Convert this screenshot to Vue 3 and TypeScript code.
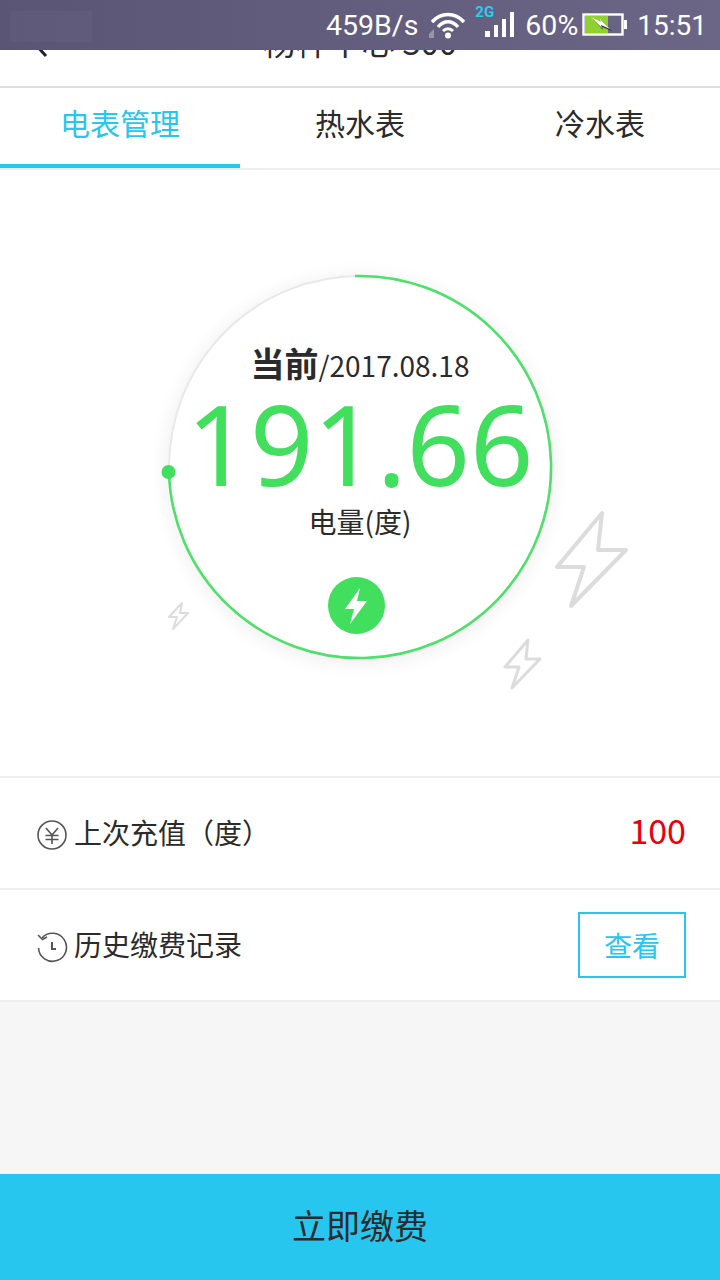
<script setup lang="ts">
import { ref } from 'vue'

const tabs = ['电表管理', '热水表', '冷水表']
const activeTab = ref(0)
</script>

<template>
  <div class="page">
    <div class="status-bar">
      <div class="status-blur"></div>
      <span class="speed">459B/s</span>
      <svg class="wifi" width="38" height="28" viewBox="0 0 38 28" fill="none">
        <path d="M3 11C12 1 26 1 35 11" stroke="#fff" stroke-width="3.4" />
        <path d="M9 16C15 9 23 9 29 16" stroke="#fff" stroke-width="3.4" />
        <path d="M14 20C17 17 21 17 24 20" stroke="#fff" stroke-width="3" />
        <circle cx="19" cy="24.5" r="3" fill="#fff" />
        <path d="M0 23L5 18V27H0Z" fill="#9a96aa" />
      </svg>
      <div class="signal">
        <span class="net">2G</span>
        <svg width="30" height="26" viewBox="0 0 30 26" fill="#fff">
          <rect x="1" y="19" width="5" height="6" />
          <rect x="10" y="13" width="4" height="12" />
          <rect x="18" y="7" width="4" height="18" />
          <rect x="26" y="0" width="4" height="25" />
        </svg>
      </div>
      <span class="percent">60%</span>
      <svg class="battery" width="46" height="24" viewBox="0 0 46 24">
        <rect x="1.5" y="1.5" width="39" height="20" fill="none" stroke="#fff" stroke-width="2.4" />
        <rect x="3" y="3" width="23" height="17" fill="#8fd22e" />
        <rect x="42" y="7" width="3" height="9" fill="#fff" />
        <path d="M10 5L20 10L19 7L30 18L20 14L21 17Z" fill="#333" />
        <path d="M9 4L19 9L18 6L28 16L19 12L20 15Z" fill="#fff" />
      </svg>
      <span class="clock">15:51</span>
    </div>

    <header class="top-bar">
      <svg class="back" width="20" height="30" viewBox="0 0 20 30" fill="none">
        <path d="M15 3L4 15L15 27" stroke="#222" stroke-width="3" />
      </svg>
      <span class="title">杨梓中心 300</span>
    </header>

    <nav class="tabs">
      <div
        v-for="(tab, i) in tabs"
        :key="tab"
        class="tab"
        :class="{ active: i === activeTab }"
        @click="activeTab = i"
      >
        {{ tab }}
      </div>
    </nav>

    <section class="meter">
      <div class="ring">
        <svg class="ring-arc" width="400" height="400" viewBox="-8 -8 400 400" fill="none">
          <circle cx="192" cy="192" r="191" stroke="#e8e8e8" stroke-width="2" />
          <path d="M187 1A191 191 0 1 1 1 197" stroke="#4ee06a" stroke-width="2.6" />
          <circle cx="0.5" cy="197" r="7" fill="#41df5d" />
        </svg>
        <div class="ring-date"><b>当前</b>/2017.08.18</div>
        <div class="ring-value">191.66</div>
        <div class="ring-unit">电量(度)</div>
        <div class="ring-badge">
          <svg width="26" height="38" viewBox="0 0 26 38" fill="#fff">
            <path d="M17 1L2 22H11L7 37L24 14H14Z" />
          </svg>
        </div>
      </div>
      <svg class="bolt bolt-lg" width="76" height="100" viewBox="0 0 76 100" fill="none">
        <path d="M48 3L3 57H30L17 96L72 40H44Z" />
      </svg>
      <svg class="bolt bolt-md" width="42" height="54" viewBox="0 0 42 54" fill="none">
        <path d="M26 2L3 29H17L10 50L38 21H24Z" />
      </svg>
      <svg class="bolt bolt-sm" width="24" height="30" viewBox="0 0 24 30" fill="none">
        <path d="M15 2L2 16H10L6 28L21 12H13Z" />
      </svg>
    </section>

    <div class="row">
      <div class="row-label">
        <svg width="32" height="32" viewBox="0 0 32 32" fill="none" stroke="#555" stroke-width="1.6">
          <circle cx="16" cy="16" r="14" />
          <path d="M10 9L16 16L22 9M16 16V25M9.500 16.500H22.500M9.500 20.500H22.500" />
        </svg>
        <span>上次充值（度）</span>
      </div>
      <span class="row-value">100</span>
    </div>
    <div class="row">
      <div class="row-label">
        <svg width="32" height="32" viewBox="0 0 32 32" fill="none" stroke="#555" stroke-width="1.6">
          <path d="M6 7A14 14 0 1 1 2.500 17" />
          <path d="M2 4L6.500 8.500L11 6" />
          <path d="M16 11V18H20" stroke-width="2" />
        </svg>
        <span>历史缴费记录</span>
      </div>
      <button class="view-btn">查看</button>
    </div>

    <div class="spacer"></div>
    <div class="pay-btn">立即缴费</div>
  </div>
</template>

<style>
body {
  margin: 0;
}
</style>

<style scoped>
.page {
  position: relative;
  display: flex;
  flex-direction: column;
  width: 720px;
  height: 1280px;
  overflow: hidden;
  background-color: #f6f6f6;
  color: #2b2b2b;
  font-family: "Noto Sans CJK SC", "Noto Sans", sans-serif;
}

.status-bar {
  position: absolute;
  top: 0;
  left: 0;
  right: 0;
  z-index: 2;
  display: flex;
  align-items: center;
  justify-content: flex-end;
  height: 50px;
  padding-right: 13px;
  box-sizing: border-box;
  background: linear-gradient(90deg, #5a5475, #6c6686);
  color: #fff;
  font-family: Roboto, sans-serif;
  font-size: 28px;
}

.status-blur {
  position: absolute;
  top: 11px;
  left: 10px;
  width: 82px;
  height: 31px;
  background-color: rgba(255, 255, 255, 0.03);
}

.speed {
  margin-right: 11px;
  font-size: 28.5px;
}

.wifi {
  margin-right: 17px;
}

.signal {
  position: relative;
  width: 30px;
  height: 26px;
  margin-right: 11px;
}

.net {
  position: absolute;
  top: -6px;
  left: -9px;
  color: #22d0f0;
  font-size: 15px;
  font-weight: 700;
  line-height: 13px;
}

.percent {
  margin-right: 4px;
  font-size: 28.5px;
}

.battery {
  margin-right: 9px;
}

.top-bar {
  position: relative;
  display: flex;
  align-items: flex-end;
  justify-content: center;
  height: 88px;
  padding-bottom: 27px;
  box-sizing: border-box;
  background-color: #fff;
  border-bottom: 2px solid #dedede;
  font-size: 33px;
  line-height: 36px;
  flex-shrink: 0;
}

.back {
  position: absolute;
  left: 31px;
  bottom: 27px;
}

.tabs {
  display: flex;
  height: 82px;
  background-color: #fff;
  border-bottom: 2px solid #eee;
  box-sizing: border-box;
  flex-shrink: 0;
}

.tab {
  flex: 1;
  height: 80px;
  box-sizing: border-box;
  padding-top: 12px;
  text-align: center;
  font-size: 30px;
  line-height: 44px;
}

.tab.active {
  color: #27c6ee;
  border-bottom: 4px solid #27c6ee;
}

.meter {
  position: relative;
  flex-shrink: 0;
  height: 608px;
  padding-top: 105px;
  box-sizing: border-box;
  background-color: #fff;
  border-bottom: 2px solid #eee;
}

.ring {
  position: relative;
  display: flex;
  flex-direction: column;
  align-items: center;
  width: 384px;
  height: 384px;
  margin-left: 168px;
  padding-top: 64px;
  box-sizing: border-box;
  border-radius: 50%;
  box-shadow: 0 3px 20px rgba(0, 0, 0, 0.08);
}

.ring-arc {
  position: absolute;
  top: -8px;
  left: -8px;
}

.ring-date {
  font-size: 28px;
  line-height: 48px;
}

.ring-date b {
  font-size: 34px;
}

.ring-value {
  margin-top: 1px;
  color: #41df5d;
  font-family: "Noto Sans", sans-serif;
  font-size: 111px;
  line-height: 106px;
}

.ring-unit {
  margin-top: 5px;
  font-size: 28px;
  line-height: 40px;
}

.ring-badge {
  display: flex;
  align-items: center;
  justify-content: center;
  width: 57px;
  height: 57px;
  margin-top: 36px;
  margin-left: -8px;
  border-radius: 50%;
  background-color: #41df5d;
}

.bolt {
  position: absolute;
}

.bolt path {
  stroke: #dcdcdc;
  stroke-width: 4;
  stroke-linejoin: round;
}

.bolt-lg {
  top: 340px;
  left: 554px;
}

.bolt-md {
  top: 468px;
  left: 502px;
}

.bolt-sm {
  top: 431px;
  left: 167px;
}

.bolt-sm path {
  stroke-width: 2;
}

.bolt-md path {
  stroke-width: 3;
}

.row {
  display: flex;
  align-items: center;
  justify-content: space-between;
  height: 112px;
  padding: 0 34px 0 36px;
  box-sizing: border-box;
  background-color: #fff;
  border-bottom: 2px solid #eee;
  flex-shrink: 0;
}

.row-label {
  display: flex;
  align-items: center;
  font-size: 28px;
}

.row-label svg {
  margin-top: 4px;
  margin-right: 6px;
}

.row-label span {
  margin-bottom: 2px;
}

.row-value {
  margin-bottom: 8px;
  color: #e8000b;
  font-size: 34px;
}

.view-btn {
  width: 108px;
  height: 66px;
  padding: 0;
  background-color: #fff;
  border: 2px solid #27c6ee;
  color: #27c6ee;
  font-family: inherit;
  font-size: 28px;
}

.spacer {
  flex: 1;
}

.pay-btn {
  height: 106px;
  flex-shrink: 0;
  background-color: #27c6ee;
  text-align: center;
  font-size: 34px;
  line-height: 102px;
}
</style>
